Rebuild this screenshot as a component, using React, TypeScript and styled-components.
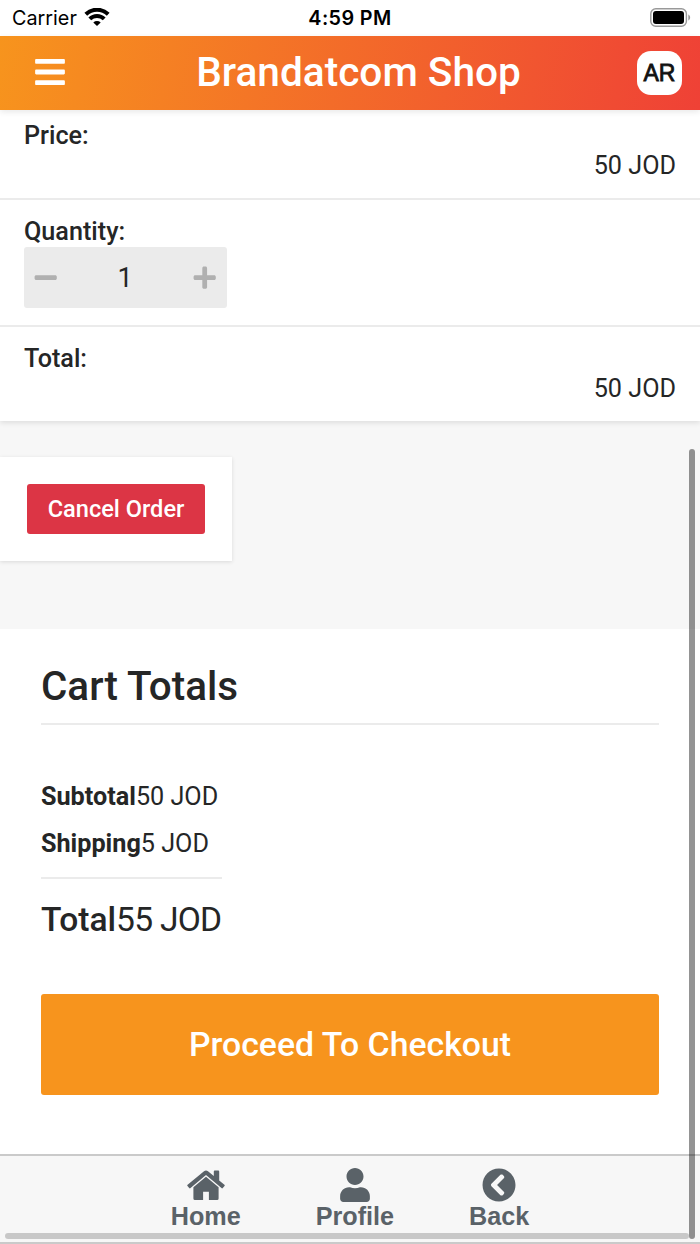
import React from "react";
import styled, { createGlobalStyle } from "styled-components";
import { FaBars, FaChevronCircleLeft, FaMinus, FaPlus, FaUser } from "react-icons/fa";

const GlobalStyle = createGlobalStyle`
  *, *::before, *::after { box-sizing: border-box; }
  body { margin: 0; background: #fff; }
  svg { display: block; }
`;

const Screen = styled.div`
  position: relative;
  display: flex;
  flex-direction: column;
  width: 700px;
  height: 1244px;
  overflow: hidden;
  background: #fff;
  color: #252626;
  font-family: Roboto, sans-serif;
  font-size: 25.2px;
  line-height: 30.4px;
`;

const StatusBar = styled.div`
  display: grid;
  grid-template-columns: 1fr auto 1fr;
  align-items: center;
  flex: none;
  height: 36px;
  padding: 0 9px 0 12px;
  color: #000;
  font: 400 19.8px/36px Inter, sans-serif;
`;

const Carrier = styled.div`
  display: flex;
  align-items: center;
  gap: 7px;
`;

const Clock = styled.div`
  margin-right: 3px;
  font-weight: 600;
  letter-spacing: 0.4px;
`;

const BatterySlot = styled.div`
  display: flex;
  justify-content: flex-end;
  padding-bottom: 1px;
`;

const Header = styled.header`
  position: relative;
  z-index: 1;
  display: grid;
  grid-template-columns: 82px 1fr 80px;
  align-items: center;
  flex: none;
  height: 74px;
  padding: 0 18px 0 33px;
  background: linear-gradient(100deg, #f7941d 0%, #ef4136 100%);
  box-shadow: 0 2px 6px rgba(0, 0, 0, 0.09);
  color: #fff;
`;

const MenuIcon = styled(FaBars)`
  margin-top: -2px;
`;

const Title = styled.h1`
  margin: -2px 0 0;
  font-size: 40.6px;
  font-weight: 500;
  line-height: 48px;
  text-align: center;
  white-space: nowrap;
`;

const Language = styled.button`
  justify-self: end;
  width: 45px;
  height: 44px;
  padding: 0;
  border: 0;
  border-radius: 14px;
  background: #fff;
  color: #111;
  font: 400 23px/44px "Liberation Sans", sans-serif;
  -webkit-text-stroke: 0.8px #111;
`;

const OrderCard = styled.section`
  position: relative;
  flex: none;
  height: 311px;
  background: #fff;
  box-shadow: 0 2px 5px rgba(0, 0, 0, 0.1);
`;

const OrderRow = styled.div<{ $height: number; $top?: number }>`
  height: ${(p) => p.$height}px;
  padding: ${(p) => p.$top ?? 17}px 24px 0;
  & + & { border-top: 2px solid #ebebeb; }
`;

const Label = styled.div`
  font-weight: 500;
`;

const Amount = styled.div`
  text-align: right;
`;

const Stepper = styled.div`
  display: flex;
  align-items: center;
  justify-content: space-between;
  width: 203px;
  height: 61px;
  padding: 0 10px 0 9px;
  border-radius: 3px;
  background: #ebebeb;
  color: #b0b0b0;
`;

const Count = styled.span`
  color: #252626;
  font-size: 27px;
`;

const ActionArea = styled.section`
  flex: none;
  height: 208px;
  padding-top: 36px;
  background: #f7f7f7;
`;

const CancelCard = styled.div`
  width: 232px;
  height: 104px;
  padding: 27px;
  background: #fff;
  box-shadow: 0 1px 4px rgba(0, 0, 0, 0.12);
`;

const CancelButton = styled.button`
  width: 178px;
  height: 50px;
  padding: 0;
  border: 0;
  border-radius: 3px;
  background: #dc3545;
  color: #fff;
  font: 500 23.6px/50px Roboto, sans-serif;
`;

const Totals = styled.section`
  flex: 1;
  padding: 34px 41px 0;
`;

const TotalsTitle = styled.h2`
  height: 62px;
  margin: 0 0 57px;
  border-bottom: 2px solid #ebebeb;
  font-size: 40.4px;
  font-weight: 500;
  line-height: 48px;
`;

const Summary = styled.div`
  width: 181px;
`;

const SummaryLine = styled.div`
  height: 47px;
  white-space: nowrap;
`;

const GrandTotal = styled.div`
  margin-top: 1px;
  padding-top: 21px;
  border-top: 2px solid #ebebeb;
  font-size: 33.6px;
  line-height: 40px;
  white-space: nowrap;
`;

const GrandAmount = styled.span`
  letter-spacing: -0.75px;
`;

const Strong = styled.span<{ $weight: number }>`
  font-weight: ${(p) => p.$weight};
`;

const Checkout = styled.button`
  display: block;
  width: 618px;
  height: 101px;
  margin-top: 54px;
  padding: 0;
  border: 0;
  border-radius: 3px;
  background: #f7941d;
  color: #fff;
  font: 500 33.8px/101px Roboto, sans-serif;
`;

const TabBar = styled.nav`
  display: flex;
  justify-content: center;
  gap: 75px;
  flex: none;
  height: 90px;
  padding-top: 12px;
  border-top: 2px solid #cacaca;
  border-bottom: 2px solid #cacaca;
  background: #f7f7f7;
`;

const Tab = styled.a`
  display: flex;
  flex-direction: column;
  align-items: center;
  color: #5a6268;
  font: 700 25.2px/29px "Liberation Sans", sans-serif;
`;

const VerticalScroll = styled.div`
  position: absolute;
  z-index: 2;
  top: 449px;
  right: 5px;
  width: 6px;
  height: 790px;
  border-radius: 3px;
  background: rgba(0, 0, 0, 0.42);
`;

const HorizontalScroll = styled.div`
  position: absolute;
  left: 5px;
  bottom: 5px;
  width: 684px;
  height: 6px;
  border-radius: 3px;
  background: #c8c8c8;
`;

const HomeIcon = () => (
  <svg width="38" height="34" viewBox="0 0 38 34" fill="currentColor">
    <path d="M19 8.8 31.6 19.2V30.6a1.5 1.5 0 0 1-1.5 1.5H21.9V23.8H16.1V32.1H7.9a1.5 1.5 0 0 1-1.5-1.5V19.2z" />
    <path d="M17 3.2a3.3 3.3 0 0 1 4 0L26.8 8V3.4a.9.9 0 0 1 .9-.9h3.6a.9.9 0 0 1 .9.9V12.4L37.4 16.7a.9.9 0 0 1 .1 1.3L35.8 20a.9.9 0 0 1-1.3.1L19 7.1 3.5 20.1A.9.9 0 0 1 2.2 20L.5 18a.9.9 0 0 1 .1-1.3z" />
  </svg>
);

const WifiIcon = () => (
  <svg width="26" height="20" viewBox="0 0 26 20">
    <g fill="none" stroke="#000" strokeWidth="4">
      <path d="M1.8 6.2a16.2 16.2 0 0 1 22.4 0" />
      <path d="M5.8 10.9a10.2 10.2 0 0 1 14.4 0" />
    </g>
    <path d="M9.3 14.4a5.5 5.5 0 0 1 7.4 0L13 18.1z" />
  </svg>
);

const BatteryIcon = () => (
  <svg width="41" height="19" viewBox="0 0 41 19">
    <rect x="0.8" y="0.8" width="35.6" height="17.4" rx="5" fill="none" stroke="#999" strokeWidth="1.4" />
    <rect x="3" y="3" width="31" height="13" rx="3" />
    <path d="M38.3 6.5c2.4.8 2.4 5.2 0 6z" fill="#999" />
  </svg>
);

export default function App() {
  return (
    <>
      <GlobalStyle />
      <Screen>
        <StatusBar>
          <Carrier>Carrier <WifiIcon /></Carrier>
          <Clock>4:59 PM</Clock>
          <BatterySlot><BatteryIcon /></BatterySlot>
        </StatusBar>
        <Header>
          <MenuIcon size={34} />
          <Title>Brandatcom Shop</Title>
          <Language>AR</Language>
        </Header>
        <OrderCard>
          <OrderRow $height={88} $top={11}>
            <Label>Price:</Label>
            <Amount>50 JOD</Amount>
          </OrderRow>
          <OrderRow $height={127}>
            <Label>Quantity:</Label>
            <Stepper>
              <FaMinus size={25.4} />
              <Count>1</Count>
              <FaPlus size={25.4} />
            </Stepper>
          </OrderRow>
          <OrderRow $height={96}>
            <Label>Total:</Label>
            <Amount>50 JOD</Amount>
          </OrderRow>
        </OrderCard>
        <ActionArea>
          <CancelCard>
            <CancelButton>Cancel Order</CancelButton>
          </CancelCard>
        </ActionArea>
        <Totals>
          <TotalsTitle>Cart Totals</TotalsTitle>
          <Summary>
            <SummaryLine><Strong $weight={700}>Subtotal</Strong>50 JOD</SummaryLine>
            <SummaryLine><Strong $weight={700}>Shipping</Strong>5 JOD</SummaryLine>
            <GrandTotal><Strong $weight={500}>Total</Strong><GrandAmount>55 JOD</GrandAmount></GrandTotal>
          </Summary>
          <Checkout>Proceed To Checkout</Checkout>
        </Totals>
        <TabBar>
          <Tab><HomeIcon />Home</Tab>
          <Tab><FaUser size={34} />Profile</Tab>
          <Tab><FaChevronCircleLeft size={34} />Back</Tab>
        </TabBar>
        <HorizontalScroll />
        <VerticalScroll />
      </Screen>
    </>
  );
}
